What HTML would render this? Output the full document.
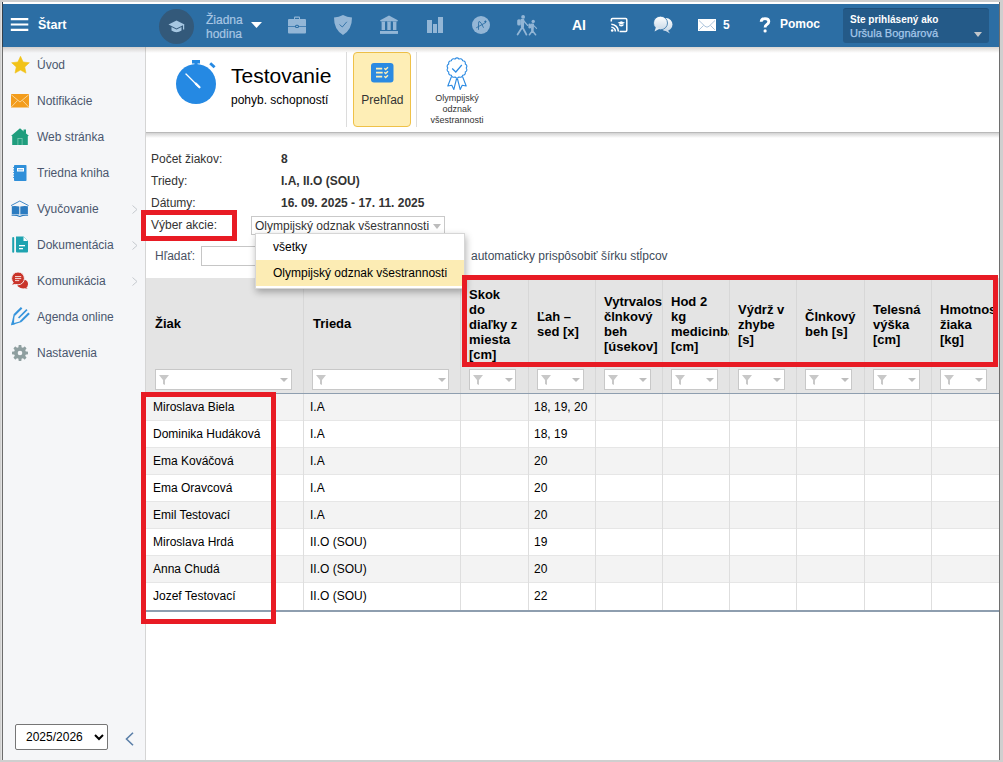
<!DOCTYPE html>
<html><head><meta charset="utf-8">
<style>
*{box-sizing:border-box;}
html,body{margin:0;padding:0;}
body{width:1003px;height:762px;position:relative;overflow:hidden;background:#cfcfcf;font-family:"Liberation Sans",sans-serif;font-size:12px;color:#222;}
.a{position:absolute;}
.t{position:absolute;white-space:nowrap;line-height:1;}
#frame{left:2px;top:2px;width:998px;height:758px;background:#fff;}
#lline{left:1px;top:2px;width:1px;height:758px;background:#e2e2e2;}
#ldark{left:2px;top:2px;width:1px;height:758px;background:linear-gradient(#33404c 0,#33404c 45px,#6c6c6c 45px);}
#rdark{left:999px;top:2px;width:1px;height:758px;background:#6e6e6e;}
#hdr{left:3px;top:4px;width:996px;height:43px;background:#2c6ea4;}
#side{left:3px;top:47px;width:143px;height:713px;background:#f5f6f8;border-right:1px solid #d5d5d5;}
.hi{fill:#93b6d6;}
.si{left:37px;font-size:12px;color:#4a566e;}
.chev{left:132px;width:6px;height:9px;}
.lbl{left:151px;font-size:12px;color:#333;}
.val{left:281px;font-size:12px;font-weight:bold;color:#333;}
</style></head><body>
<div class="a" id="frame"></div>
<div class="a" id="lline"></div>
<div class="a" id="ldark"></div>
<div class="a" id="rdark"></div>
<div class="a" id="hdr"></div>

<!-- header content -->
<svg class="a" style="left:10px;top:16px" width="20" height="17" viewBox="0 0 20 17"><path d="M0.8 3.1 H18.3 M0.8 8.5 H18.3 M0.8 13.9 H18.3" stroke="#fff" stroke-width="2.1"/></svg>
<div class="t" style="left:38px;top:19px;font-size:12.5px;font-weight:bold;color:#fff;">Štart</div>

<div class="a" style="left:159px;top:9px;width:35px;height:35px;border-radius:50%;background:#33597a"></div>
<svg class="a" style="left:168px;top:20px" width="17" height="15" viewBox="0 0 17 15"><path d="M8.5 0.5 L16.5 4.5 L8.5 8.5 L0.5 4.5Z" fill="#a6c7e2"/><path d="M3.5 7 V10.5 Q8.5 14 13.5 10.5 V7 L8.5 9.6 Z" fill="#a6c7e2"/><rect x="15" y="4.5" width="1.2" height="5" fill="#a6c7e2"/></svg>
<div class="t" style="left:206px;top:13px;font-size:12px;line-height:14px;color:#a8c6e3;-webkit-text-stroke:0.2px #a8c6e3;">Žiadna<br>hodina</div>
<svg class="a" style="left:251px;top:22px" width="11" height="6" viewBox="0 0 11 6"><path d="M0 0H11L5.5 6Z" fill="#fff"/></svg>

<!-- briefcase -->
<svg class="a" style="left:287px;top:16px" width="20" height="18" viewBox="0 0 20 18"><path d="M7 3 V1.5 Q7 0.5 8 0.5 H12 Q13 0.5 13 1.5 V3 H12 V1.7 H8 V3Z" class="hi"/><rect x="1" y="3" width="18" height="14.5" rx="1" class="hi"/><rect x="1" y="10" width="18" height="0.9" fill="#3e7bb0"/><rect x="8" y="8.8" width="4" height="3.2" rx="1.5" fill="#2c6ea4"/><rect x="9" y="9.9" width="2" height="1" class="hi"/></svg>
<!-- shield -->
<svg class="a" style="left:333px;top:15px" width="20" height="20" viewBox="0 0 20 20"><path d="M10 0 Q14 2.2 19 2.5 Q19.2 14.5 10 20 Q0.8 14.5 1 2.5 Q6 2.2 10 0Z" class="hi"/><path d="M6.5 9.5 L9.3 12 L13.8 6.8" stroke="#2c6ea4" stroke-width="0.9" fill="none"/></svg>
<!-- bank -->
<svg class="a" style="left:380px;top:15px" width="19" height="19" viewBox="0 0 19 19"><path d="M9 0.6 L17.8 5.2 V6.2 H0.2 V5.2Z" class="hi"/><path d="M1.2 6.5 H5.4 L5 7.6 V15 H1.6 V7.6Z M6.9 6.5 H11.1 L10.7 7.6 V15 H7.3 V7.6Z M12.6 6.5 H16.8 L16.4 7.6 V15 H13 V7.6Z" class="hi"/><rect x="0" y="16" width="18" height="2.9" class="hi"/></svg>
<!-- bars -->
<svg class="a" style="left:427px;top:17px" width="16" height="16" viewBox="0 0 16 16"><rect x="0" y="3" width="5" height="13" class="hi"/><rect x="6" y="7" width="4" height="9" class="hi"/><rect x="11" y="0" width="5" height="16" class="hi"/></svg>
<!-- A+ -->
<svg class="a" style="left:472px;top:16px" width="18" height="18" viewBox="0 0 18 18"><circle cx="9" cy="9" r="9" class="hi"/><path d="M6.5 13.4 V7.2 Q6.5 4.8 8 5.8 Q9.3 6.8 11.4 11.4 M4.6 11.6 L13.6 6.6" stroke="#2c6ea4" stroke-width="0.9" fill="none" stroke-linecap="round"/><path d="M12.3 5.6 H14.5 M13.4 4.5 V6.7" stroke="#2c6ea4" stroke-width="1" fill="none"/></svg>
<!-- walkers -->
<svg class="a" style="left:510px;top:10px" width="35" height="30" viewBox="0 0 35 30"><g fill="#93b6d6" stroke="#93b6d6" stroke-linecap="round" stroke-linejoin="round"><circle cx="13.1" cy="6.9" r="1.9" stroke="none"/><rect x="7.2" y="9.2" width="3.6" height="6.4" rx="1.6" stroke="none"/><path d="M11.2 9.8 L13.6 9.6 L13.3 17 L11.6 17Z" stroke-width="1.4"/><path d="M13.4 10.5 L17.6 15.4" stroke-width="1.3" fill="none"/><path d="M12.4 17 L7.6 24.6 M12.4 17 L16.4 24.6" stroke-width="1.8" fill="none"/><circle cx="23.2" cy="11.4" r="1.7" stroke="none"/><rect x="18.4" y="13.6" width="2.6" height="4.9" rx="1.2" stroke="none"/><path d="M21.6 14.2 L23.4 14.1 L23 20.8 L21.8 20.8Z" stroke-width="1.2"/><path d="M23.3 15.2 L26.6 18.4" stroke-width="1.1" fill="none"/><path d="M22.4 20.8 L19.4 24.8 M22.4 20.8 L25.6 24.8" stroke-width="1.5" fill="none"/></g></svg>

<div class="t" style="left:572px;top:18px;font-size:14px;font-weight:bold;color:#fff;">AI</div>
<!-- cast -->
<svg class="a" style="left:610px;top:17px" width="18" height="16" viewBox="0 0 18 16"><path d="M1.3 4.6 V2.8 Q1.3 1.6 2.5 1.6 H15.6 Q16.8 1.6 16.8 2.8 V13.2 Q16.8 14.4 15.6 14.4 H9.6" stroke="#fff" stroke-width="1.5" fill="none"/><path d="M1.3 7.2 A7.4 7.4 0 0 1 8.4 14.4 M1.3 10.2 A4.3 4.3 0 0 1 5.4 14.4" stroke="#fff" stroke-width="1.6" fill="none"/><circle cx="2.2" cy="13.5" r="1.3" fill="#fff"/><path d="M11.3 4.2 L15 5.8 L11.3 7.4 L7.6 5.8Z M9.1 7 V8.6 Q11.3 10.4 13.5 8.6 V7 L11.3 8Z" fill="#fff"/></svg>
<!-- chat -->
<svg class="a" style="left:653px;top:16px" width="20" height="18" viewBox="0 0 20 18"><defs><linearGradient id="cg" x1="0" y1="0" x2="0" y2="1"><stop offset="0" stop-color="#fff"/><stop offset="1" stop-color="#c9d9e8"/></linearGradient></defs><ellipse cx="13" cy="8.5" rx="6.5" ry="6.5" fill="url(#cg)"/><path d="M14 13 L17 17.5 L11 14Z" fill="#c9d9e8"/><ellipse cx="7.5" cy="7" rx="7" ry="6.8" fill="url(#cg)" stroke="#2c6ea4" stroke-width="0.8"/><path d="M3 11 L1.5 15.5 L7 12.5Z" fill="#dfe9f2"/></svg>
<!-- envelope -->
<svg class="a" style="left:698px;top:19px" width="18" height="12" viewBox="0 0 18 12"><rect x="0" y="0" width="18" height="12" fill="#fff"/><path d="M1 1.5 L7 7.3 Q9 9 11 7.3 L17 1.5 M1.2 10.8 L5.5 6.5 M16.8 10.8 L12.5 6.5" stroke="#88aacb" stroke-width="0.7" fill="none"/></svg>
<div class="t" style="left:723px;top:19px;font-size:12px;font-weight:bold;color:#fff;">5</div>
<svg class="a" style="left:759px;top:17px" width="12" height="16" viewBox="0 0 12 16"><path d="M2.2 4.8 Q2.2 1.6 6 1.6 Q9.8 1.6 9.8 4.6 Q9.8 6.5 7.6 7.8 Q6.1 8.7 6.1 10.6" stroke="#fff" stroke-width="2.9" fill="none"/><circle cx="6.1" cy="13.9" r="1.6" fill="#fff"/></svg>
<div class="t" style="left:780px;top:18px;font-size:12px;font-weight:bold;color:#fff;">Pomoc</div>
<div class="a" style="left:843px;top:8px;width:146px;height:35px;border-radius:3px;background:#245a88;border-top:1px solid #1e4f7b;"></div>
<div class="t" style="left:850px;top:14.6px;font-size:10px;font-weight:bold;color:#fff;">Ste prihlásený ako</div>
<div class="t" style="left:850px;top:28px;font-size:11px;color:#a6c8ea;-webkit-text-stroke:0.25px #a6c8ea;">Uršula Bognárová</div>
<svg class="a" style="left:974px;top:32px" width="8" height="5" viewBox="0 0 8 5"><path d="M0 0H8L4 5Z" fill="#c3c7cb"/></svg>

<div class="a" id="side"></div>

<!-- sidebar items -->
<svg class="a" style="left:10.5px;top:56px" width="19" height="18" viewBox="0 0 19 18"><path d="M9.50 0.30 L12.12 5.99 L18.34 6.73 L13.75 10.98 L14.97 17.12 L9.50 14.06 L4.03 17.12 L5.25 10.98 L0.66 6.73 L6.88 5.99Z" fill="#f2c318" stroke="#f2c318" stroke-width="0.6" stroke-linejoin="round"/></svg>
<div class="t si" style="top:59px">Úvod</div>
<svg class="a" style="left:11px;top:94px" width="18" height="14" viewBox="0 0 18 14"><rect width="18" height="13.5" fill="#f39c1b"/><path d="M0.3 0.8 L9 8 L17.7 0.8 M0.3 13 L6.5 6.5 M17.7 13 L11.5 6.5" stroke="#fde3b8" stroke-width="0.8" fill="none"/></svg>
<div class="t si" style="top:95px">Notifikácie</div>
<svg class="a" style="left:11px;top:128px" width="18" height="17" viewBox="0 0 18 17"><path d="M9 0.3 L17.8 7.8 L16.8 8.3 V17 H1.2 V8.3 L0.2 7.8Z" fill="#1f9d7d"/><rect x="12.5" y="1.5" width="2.5" height="4" fill="#1f9d7d"/><rect x="6.5" y="10" width="5" height="7" fill="#7ccab5"/><rect x="7.3" y="10.8" width="3.4" height="6.2" fill="#1f9d7d"/></svg>
<div class="t si" style="top:131px">Web stránka</div>
<svg class="a" style="left:13px;top:165px" width="14" height="16" viewBox="0 0 14 16"><rect x="1" y="0" width="12.5" height="16" rx="0.8" fill="#2f8fd9"/><rect x="4" y="3" width="7" height="3.5" fill="#fff"/><rect x="5" y="4" width="5" height="1.5" fill="#9cc8ee"/><path d="M0 2.5H2M0 5H2M0 7.5H2M0 10H2M0 12.5H2" stroke="#2f8fd9" stroke-width="0.8"/></svg>
<div class="t si" style="top:167px">Triedna kniha</div>
<svg class="a" style="left:10px;top:200px" width="20" height="18" viewBox="0 0 20 18"><path d="M1 5.6 L9.8 1 L18.6 5.6" stroke="#2b7bc0" stroke-width="0.9" fill="none"/><path d="M1.8 6.3 Q5.5 5.5 9.3 6.6 V14.6 Q5.5 13.8 1.8 14.2Z M17.9 6.3 Q14.1 5.5 10.3 6.6 V14.6 Q14.1 13.8 17.9 14.2Z" fill="#2b7bc0"/><path d="M1.6 15.3 Q5.5 14.6 9.8 16.4 Q14.1 14.6 18.1 15.3" stroke="#2b7bc0" stroke-width="1.1" fill="none"/></svg>
<div class="t si" style="top:203px">Vyučovanie</div>
<svg class="a" style="left:11px;top:236px" width="18" height="17" viewBox="0 0 18 17"><rect x="1.2" y="1" width="2" height="15.8" rx="1" fill="#1ea3b0"/><path d="M5 0.5 H12.5 L17 5 V15.5 Q17 16.5 16 16.5 H6 Q5 16.5 5 15.5Z" fill="#1ea3b0"/><path d="M12.5 0.8 V5 H16.8" fill="#fff"/><rect x="8" y="9" width="6" height="1.3" fill="#fff"/><rect x="8" y="12" width="4" height="1.3" fill="#fff"/></svg>
<div class="t si" style="top:239px">Dokumentácia</div>
<svg class="a" style="left:8px;top:270px" width="24" height="22" viewBox="0 0 24 22"><g fill="#c9342a"><path d="M10.5 10.5 Q15 9.5 17.5 10 Q20.2 11 20 14.5 Q19.6 17 18.2 17.8 L19.8 18.8 L16.5 18.3 Q13 18.8 10 16.5 Q9.4 15.8 9.5 15Z"/></g><circle cx="10" cy="8.4" r="6.4" fill="#c9342a" stroke="#f5f6f8" stroke-width="0.9"/><path d="M6 12.2 L4 14.8 L8.8 13.6Z" fill="#c9342a"/><g fill="#f3cfcb"><rect x="7" y="6" width="6.2" height="1.1"/><rect x="7" y="8" width="6.2" height="1.1"/><rect x="7" y="10" width="4.2" height="1.1"/></g></svg>
<div class="t si" style="top:275px">Komunikácia</div>
<svg class="a" style="left:8px;top:304px" width="24" height="24" viewBox="0 0 24 24"><g transform="translate(3.2 21.3) rotate(-45)" fill="#3594dc"><rect x="9.4" y="-6.1" width="10.4" height="2.1"/><rect x="10.4" y="-0.8" width="11.8" height="1.7"/><rect x="9.6" y="3" width="11.6" height="2.1"/><path d="M9.6 -6.1 L0 0 L9.8 5.1 L9.8 3 L8.6 3.3 L3.6 0.3 L8.4 -3.8 L9.6 -4Z"/><path d="M0 0 L3.8 -2.4 L4 2.3Z"/></g></svg>
<div class="t si" style="top:311px">Agenda online</div>
<svg class="a" style="left:11px;top:344px" width="18" height="18" viewBox="0 0 18 18"><g fill="#8f9fa0"><circle cx="9" cy="9" r="6"/><rect x="7.5" y="1" width="3" height="16" rx="0.7"/><rect x="7.5" y="1" width="3" height="16" rx="0.7" transform="rotate(45 9 9)"/><rect x="7.5" y="1" width="3" height="16" rx="0.7" transform="rotate(90 9 9)"/><rect x="7.5" y="1" width="3" height="16" rx="0.7" transform="rotate(135 9 9)"/></g><circle cx="9" cy="9" r="2.3" fill="#f5f6f8"/></svg>
<div class="t si" style="top:347px">Nastavenia</div>
<svg class="a chev" style="top:205px" viewBox="0 0 6 9"><path d="M0.5 0.5 L5 4.5 L0.5 8.5" stroke="#c5c9ce" stroke-width="1" fill="none"/></svg>
<svg class="a chev" style="top:241px" viewBox="0 0 6 9"><path d="M0.5 0.5 L5 4.5 L0.5 8.5" stroke="#c5c9ce" stroke-width="1" fill="none"/></svg>
<svg class="a chev" style="top:277px" viewBox="0 0 6 9"><path d="M0.5 0.5 L5 4.5 L0.5 8.5" stroke="#c5c9ce" stroke-width="1" fill="none"/></svg>
<div class="a" style="left:15px;top:724px;width:93px;height:26px;border:1px solid #767676;border-radius:2px;background:#fff;"></div>
<div class="t" style="left:26px;top:731px;font-size:12px;color:#000;">2025/2026</div>
<svg class="a" style="left:94px;top:734px" width="10" height="7" viewBox="0 0 10 7"><path d="M1 1 L5 5 L9 1" stroke="#000" stroke-width="2" fill="none"/></svg>
<svg class="a" style="left:125px;top:732px" width="9" height="14" viewBox="0 0 9 14"><path d="M8 0.7 L1.5 7 L8 13.3" stroke="#5b7fa8" stroke-width="1.6" fill="none"/></svg>

<!-- toolbar -->
<div class="a" style="left:146px;top:132px;width:853px;height:1px;background:#b9b9b9;"></div>
<div class="a" style="left:146px;top:133px;width:853px;height:5px;background:linear-gradient(#d2d2d2,#fff);"></div>
<svg class="a" style="left:175px;top:59px" width="42" height="46" viewBox="0 0 42 46"><circle cx="21" cy="25" r="20" fill="#2589e3"/><rect x="17" y="1" width="8" height="3.5" fill="#2589e3"/><rect x="19.5" y="3" width="3" height="3" fill="#2589e3"/><path d="M35.2 4.2 L39.6 8.3" stroke="#2589e3" stroke-width="2.8"/><path d="M11 15 L23.5 27.5" stroke="#fff" stroke-width="1.3" stroke-linecap="round"/><path d="M20.8 24.6 L24.5 28.3" stroke="#fff" stroke-width="2.2" stroke-linecap="round"/></svg>
<div class="t" style="left:231px;top:65px;font-size:21px;color:#000;">Testovanie</div>
<div class="t" style="left:231px;top:94px;font-size:12px;color:#000;">pohyb. schopností</div>
<div class="a" style="left:346px;top:52px;width:1px;height:75px;background:#dcdcdc;"></div>
<div class="a" style="left:416px;top:52px;width:1px;height:75px;background:#dcdcdc;"></div>
<div class="a" style="left:353px;top:52px;width:58px;height:75px;border:1px solid #efc148;border-radius:4px;background:#feeeb6;"></div>
<svg class="a" style="left:371px;top:63px" width="23" height="20" viewBox="0 0 23 20"><rect x="0" y="0" width="22.5" height="19.5" rx="3" fill="#2b8ae2"/><path d="M5 5.7 H11.2 M5 9.7 H11.7 M5 13.7 H11.2" stroke="#feefb8" stroke-width="1.7"/><path d="M13.3 5.3 L14.7 6.5 L17 4.2 M13.3 9.3 L14.7 10.5 L17 8.2 M13.3 13.3 L14.7 14.5 L17 12.2" stroke="#feefb8" stroke-width="1.4" fill="none"/></svg>
<div class="t" style="left:361.3px;top:94px;font-size:12px;color:#333;">Prehľad</div>
<svg class="a" style="left:445px;top:57px" width="24" height="34" viewBox="0 0 24 34"><path d="M21.20 11.00 Q22.95 13.50 20.29 14.99 Q20.78 18.00 17.74 18.19 Q16.87 21.12 14.05 19.97 Q12.00 22.23 9.95 19.97 Q7.13 21.12 6.26 18.19 Q3.22 18.00 3.71 14.99 Q1.05 13.50 2.80 11.00 Q1.05 8.50 3.71 7.01 Q3.22 4.00 6.26 3.81 Q7.13 0.88 9.95 2.03 Q12.00 -0.23 14.05 2.03 Q16.87 0.88 17.74 3.81 Q20.78 4.00 20.29 7.01 Q22.95 8.50 21.20 11.00Z" fill="none" stroke="#2b8ae2" stroke-width="1.1"/><path d="M7.2 11.5 L10.8 15 L16.8 8" stroke="#2b8ae2" stroke-width="1.2" fill="none"/><path d="M6.5 19.5 L2.8 29 L6.8 28.2 L8.8 32.5 L11.6 21.5 M17.5 19.5 L21.2 29 L17.2 28.2 L15.2 32.5 L12.4 21.5" stroke="#2b8ae2" stroke-width="1.1" fill="none" stroke-linejoin="round"/></svg>
<div class="t" style="left:417px;top:93.2px;width:80px;text-align:center;font-size:9px;line-height:10.75px;color:#333;">Olympijský<br>odznak<br>všestrannosti</div>

<!-- info -->
<div class="t lbl" style="top:153px">Počet žiakov:</div>
<div class="t val" style="top:153px">8</div>
<div class="t lbl" style="top:175px">Triedy:</div>
<div class="t val" style="top:175px">I.A, II.O (SOU)</div>
<div class="t lbl" style="top:197px">Dátumy:</div>
<div class="t val" style="top:197px">16. 09. 2025 - 17. 11. 2025</div>
<div class="t lbl" style="top:219px;left:151px">Výber akcie:</div>
<div class="a" style="left:251px;top:216px;width:194px;height:19px;border:1px solid #c9c9c9;background:#fff;"></div>
<div class="t" style="left:255px;top:220px;font-size:12px;color:#333;">Olympijský odznak všestrannosti</div>
<svg class="a" style="left:433px;top:224px" width="8" height="5" viewBox="0 0 8 5"><path d="M0 0H8L4 5Z" fill="#bcbcbc"/></svg>
<div class="t" style="left:155px;top:250px;font-size:12px;color:#4b5262;">Hľadať:</div>
<div class="a" style="left:201px;top:246px;width:80px;height:20px;border:1px solid #c6c6c6;background:#fff;"></div>
<div class="t" style="left:471px;top:250px;font-size:12px;color:#404b5a;">automaticky prispôsobiť šírku stĺpcov</div>
<!-- table -->
<div class="a" style="left:146px;top:278px;width:853px;height:115px;background:#e4e4e4;"></div>
<div class="a" style="left:146px;top:393px;width:853px;height:1px;background:#8e9eaf;"></div>
<div class="a" style="left:146px;top:394px;width:853px;height:27px;background:#f3f3f3;"></div>
<div class="t" style="left:153px;top:401px;font-size:12px;color:#000;">Miroslava Biela</div>
<div class="t" style="left:310px;top:401px;font-size:12px;color:#000;">I.A</div>
<div class="t" style="left:534px;top:401px;font-size:12px;color:#000;">18, 19, 20</div>
<div class="a" style="left:146px;top:421px;width:853px;height:27px;background:#fff;"></div>
<div class="a" style="left:146px;top:420px;width:853px;height:1px;background:#e6e6e6;"></div>
<div class="t" style="left:153px;top:428px;font-size:12px;color:#000;">Dominika Hudáková</div>
<div class="t" style="left:310px;top:428px;font-size:12px;color:#000;">I.A</div>
<div class="t" style="left:534px;top:428px;font-size:12px;color:#000;">18, 19</div>
<div class="a" style="left:146px;top:448px;width:853px;height:27px;background:#f3f3f3;"></div>
<div class="a" style="left:146px;top:447px;width:853px;height:1px;background:#e6e6e6;"></div>
<div class="t" style="left:153px;top:455px;font-size:12px;color:#000;">Ema Kováčová</div>
<div class="t" style="left:310px;top:455px;font-size:12px;color:#000;">I.A</div>
<div class="t" style="left:534px;top:455px;font-size:12px;color:#000;">20</div>
<div class="a" style="left:146px;top:475px;width:853px;height:27px;background:#fff;"></div>
<div class="a" style="left:146px;top:474px;width:853px;height:1px;background:#e6e6e6;"></div>
<div class="t" style="left:153px;top:482px;font-size:12px;color:#000;">Ema Oravcová</div>
<div class="t" style="left:310px;top:482px;font-size:12px;color:#000;">I.A</div>
<div class="t" style="left:534px;top:482px;font-size:12px;color:#000;">20</div>
<div class="a" style="left:146px;top:502px;width:853px;height:27px;background:#f3f3f3;"></div>
<div class="a" style="left:146px;top:501px;width:853px;height:1px;background:#e6e6e6;"></div>
<div class="t" style="left:153px;top:509px;font-size:12px;color:#000;">Emil Testovací</div>
<div class="t" style="left:310px;top:509px;font-size:12px;color:#000;">I.A</div>
<div class="t" style="left:534px;top:509px;font-size:12px;color:#000;">20</div>
<div class="a" style="left:146px;top:529px;width:853px;height:27px;background:#fff;"></div>
<div class="a" style="left:146px;top:528px;width:853px;height:1px;background:#e6e6e6;"></div>
<div class="t" style="left:153px;top:536px;font-size:12px;color:#000;">Miroslava Hrdá</div>
<div class="t" style="left:310px;top:536px;font-size:12px;color:#000;">II.O (SOU)</div>
<div class="t" style="left:534px;top:536px;font-size:12px;color:#000;">19</div>
<div class="a" style="left:146px;top:556px;width:853px;height:27px;background:#f3f3f3;"></div>
<div class="a" style="left:146px;top:555px;width:853px;height:1px;background:#e6e6e6;"></div>
<div class="t" style="left:153px;top:563px;font-size:12px;color:#000;">Anna Chudá</div>
<div class="t" style="left:310px;top:563px;font-size:12px;color:#000;">II.O (SOU)</div>
<div class="t" style="left:534px;top:563px;font-size:12px;color:#000;">20</div>
<div class="a" style="left:146px;top:583px;width:853px;height:27px;background:#fff;"></div>
<div class="a" style="left:146px;top:582px;width:853px;height:1px;background:#e6e6e6;"></div>
<div class="t" style="left:153px;top:590px;font-size:12px;color:#000;">Jozef Testovací</div>
<div class="t" style="left:310px;top:590px;font-size:12px;color:#000;">II.O (SOU)</div>
<div class="t" style="left:534px;top:590px;font-size:12px;color:#000;">22</div>
<div class="a" style="left:146px;top:610px;width:853px;height:2px;background:#8e9eaf;"></div>
<div class="a" style="left:303px;top:278px;width:1px;height:115px;background:#d7d7d7;"></div>
<div class="a" style="left:303px;top:394px;width:1px;height:216px;background:#dedede;"></div>
<div class="a" style="left:460px;top:278px;width:1px;height:115px;background:#d7d7d7;"></div>
<div class="a" style="left:460px;top:394px;width:1px;height:216px;background:#dedede;"></div>
<div class="a" style="left:528px;top:278px;width:1px;height:115px;background:#d7d7d7;"></div>
<div class="a" style="left:528px;top:394px;width:1px;height:216px;background:#dedede;"></div>
<div class="a" style="left:595px;top:278px;width:1px;height:115px;background:#d7d7d7;"></div>
<div class="a" style="left:595px;top:394px;width:1px;height:216px;background:#dedede;"></div>
<div class="a" style="left:662px;top:278px;width:1px;height:115px;background:#d7d7d7;"></div>
<div class="a" style="left:662px;top:394px;width:1px;height:216px;background:#dedede;"></div>
<div class="a" style="left:729px;top:278px;width:1px;height:115px;background:#d7d7d7;"></div>
<div class="a" style="left:729px;top:394px;width:1px;height:216px;background:#dedede;"></div>
<div class="a" style="left:796px;top:278px;width:1px;height:115px;background:#d7d7d7;"></div>
<div class="a" style="left:796px;top:394px;width:1px;height:216px;background:#dedede;"></div>
<div class="a" style="left:864px;top:278px;width:1px;height:115px;background:#d7d7d7;"></div>
<div class="a" style="left:864px;top:394px;width:1px;height:216px;background:#dedede;"></div>
<div class="a" style="left:931px;top:278px;width:1px;height:115px;background:#d7d7d7;"></div>
<div class="a" style="left:931px;top:394px;width:1px;height:216px;background:#dedede;"></div>
<div class="a" style="left:155px;top:369px;width:137px;height:21px;border:1px solid #c8c8c8;background:#fff;"></div>
<svg class="a" style="left:159px;top:375px" width="10" height="10" viewBox="0 0 10 10"><path d="M0 0 H10 L6 5 V10 L4 9 V5Z" fill="#c8c8c8"/></svg>
<svg class="a" style="left:280px;top:378px" width="8" height="4" viewBox="0 0 8 4"><path d="M0 0H8L4 4Z" fill="#bdbdbd"/></svg>
<div class="a" style="left:312px;top:369px;width:137px;height:21px;border:1px solid #c8c8c8;background:#fff;"></div>
<svg class="a" style="left:316px;top:375px" width="10" height="10" viewBox="0 0 10 10"><path d="M0 0 H10 L6 5 V10 L4 9 V5Z" fill="#c8c8c8"/></svg>
<svg class="a" style="left:438px;top:378px" width="8" height="4" viewBox="0 0 8 4"><path d="M0 0H8L4 4Z" fill="#bdbdbd"/></svg>
<div class="a" style="left:469px;top:369px;width:47px;height:21px;border:1px solid #c8c8c8;background:#fff;"></div>
<svg class="a" style="left:473px;top:375px" width="10" height="10" viewBox="0 0 10 10"><path d="M0 0 H10 L6 5 V10 L4 9 V5Z" fill="#c8c8c8"/></svg>
<svg class="a" style="left:504.5px;top:378px" width="8" height="4" viewBox="0 0 8 4"><path d="M0 0H8L4 4Z" fill="#bdbdbd"/></svg>
<div class="a" style="left:537px;top:369px;width:47px;height:21px;border:1px solid #c8c8c8;background:#fff;"></div>
<svg class="a" style="left:541px;top:375px" width="10" height="10" viewBox="0 0 10 10"><path d="M0 0 H10 L6 5 V10 L4 9 V5Z" fill="#c8c8c8"/></svg>
<svg class="a" style="left:571.5px;top:378px" width="8" height="4" viewBox="0 0 8 4"><path d="M0 0H8L4 4Z" fill="#bdbdbd"/></svg>
<div class="a" style="left:604px;top:369px;width:47px;height:21px;border:1px solid #c8c8c8;background:#fff;"></div>
<svg class="a" style="left:608px;top:375px" width="10" height="10" viewBox="0 0 10 10"><path d="M0 0 H10 L6 5 V10 L4 9 V5Z" fill="#c8c8c8"/></svg>
<svg class="a" style="left:638.5px;top:378px" width="8" height="4" viewBox="0 0 8 4"><path d="M0 0H8L4 4Z" fill="#bdbdbd"/></svg>
<div class="a" style="left:671px;top:369px;width:47px;height:21px;border:1px solid #c8c8c8;background:#fff;"></div>
<svg class="a" style="left:675px;top:375px" width="10" height="10" viewBox="0 0 10 10"><path d="M0 0 H10 L6 5 V10 L4 9 V5Z" fill="#c8c8c8"/></svg>
<svg class="a" style="left:705.5px;top:378px" width="8" height="4" viewBox="0 0 8 4"><path d="M0 0H8L4 4Z" fill="#bdbdbd"/></svg>
<div class="a" style="left:738px;top:369px;width:47px;height:21px;border:1px solid #c8c8c8;background:#fff;"></div>
<svg class="a" style="left:742px;top:375px" width="10" height="10" viewBox="0 0 10 10"><path d="M0 0 H10 L6 5 V10 L4 9 V5Z" fill="#c8c8c8"/></svg>
<svg class="a" style="left:772.5px;top:378px" width="8" height="4" viewBox="0 0 8 4"><path d="M0 0H8L4 4Z" fill="#bdbdbd"/></svg>
<div class="a" style="left:805px;top:369px;width:47px;height:21px;border:1px solid #c8c8c8;background:#fff;"></div>
<svg class="a" style="left:809px;top:375px" width="10" height="10" viewBox="0 0 10 10"><path d="M0 0 H10 L6 5 V10 L4 9 V5Z" fill="#c8c8c8"/></svg>
<svg class="a" style="left:840.5px;top:378px" width="8" height="4" viewBox="0 0 8 4"><path d="M0 0H8L4 4Z" fill="#bdbdbd"/></svg>
<div class="a" style="left:873px;top:369px;width:47px;height:21px;border:1px solid #c8c8c8;background:#fff;"></div>
<svg class="a" style="left:877px;top:375px" width="10" height="10" viewBox="0 0 10 10"><path d="M0 0 H10 L6 5 V10 L4 9 V5Z" fill="#c8c8c8"/></svg>
<svg class="a" style="left:907.5px;top:378px" width="8" height="4" viewBox="0 0 8 4"><path d="M0 0H8L4 4Z" fill="#bdbdbd"/></svg>
<div class="a" style="left:940px;top:369px;width:47px;height:21px;border:1px solid #c8c8c8;background:#fff;"></div>
<svg class="a" style="left:944px;top:375px" width="10" height="10" viewBox="0 0 10 10"><path d="M0 0 H10 L6 5 V10 L4 9 V5Z" fill="#c8c8c8"/></svg>
<svg class="a" style="left:974.5px;top:378px" width="8" height="4" viewBox="0 0 8 4"><path d="M0 0H8L4 4Z" fill="#bdbdbd"/></svg>
<div class="t" style="left:155px;top:315.50px;font-size:13px;font-weight:bold;line-height:15px;color:#000;">Žiak</div>
<div class="t" style="left:313px;top:315.50px;font-size:13px;font-weight:bold;line-height:15px;color:#000;">Trieda</div>
<div class="a" style="left:460px;top:278px;width:68px;height:90px;overflow:hidden;"><div class="t" style="left:9px;top:8.50px;font-size:13px;font-weight:bold;line-height:15px;color:#000;">Skok<br>do<br>diaľky z<br>miesta<br>[cm]</div></div>
<div class="a" style="left:528px;top:278px;width:67px;height:90px;overflow:hidden;"><div class="t" style="left:9px;top:31.00px;font-size:13px;font-weight:bold;line-height:15px;color:#000;">Ľah –<br>sed [x]</div></div>
<div class="a" style="left:595px;top:278px;width:67px;height:90px;overflow:hidden;"><div class="t" style="left:9px;top:16.00px;font-size:13px;font-weight:bold;line-height:15px;color:#000;">Vytrvalostný<br>člnkový<br>beh<br>[úsekov]</div></div>
<div class="a" style="left:662px;top:278px;width:67px;height:90px;overflow:hidden;"><div class="t" style="left:9px;top:16.00px;font-size:13px;font-weight:bold;line-height:15px;color:#000;">Hod 2<br>kg<br>medicinbalu<br>[cm]</div></div>
<div class="a" style="left:729px;top:278px;width:67px;height:90px;overflow:hidden;"><div class="t" style="left:9px;top:23.50px;font-size:13px;font-weight:bold;line-height:15px;color:#000;">Výdrž v<br>zhybe<br>[s]</div></div>
<div class="a" style="left:796px;top:278px;width:68px;height:90px;overflow:hidden;"><div class="t" style="left:9px;top:31.00px;font-size:13px;font-weight:bold;line-height:15px;color:#000;">Člnkový<br>beh [s]</div></div>
<div class="a" style="left:864px;top:278px;width:67px;height:90px;overflow:hidden;"><div class="t" style="left:9px;top:23.50px;font-size:13px;font-weight:bold;line-height:15px;color:#000;">Telesná<br>výška<br>[cm]</div></div>
<div class="a" style="left:931px;top:278px;width:67px;height:90px;overflow:hidden;"><div class="t" style="left:9px;top:23.50px;font-size:13px;font-weight:bold;line-height:15px;color:#000;">Hmotnosť<br>žiaka<br>[kg]</div></div>

<div class="a" style="left:3px;top:47px;width:996px;height:6px;background:linear-gradient(rgba(60,40,20,0.19),rgba(0,0,0,0));"></div>
<!-- popup -->
<div class="a" style="left:255px;top:233px;width:210px;height:56px;background:#fff;border:1px solid #d6d6d6;box-shadow:1px 3px 7px rgba(0,0,0,0.3);"></div>
<div class="t" style="left:273px;top:241px;font-size:12px;color:#000;">všetky</div>
<div class="a" style="left:256px;top:260px;width:208px;height:26px;background:#fcecb4;"></div>
<div class="t" style="left:273px;top:267px;font-size:12px;color:#000;">Olympijský odznak všestrannosti</div>
<!-- red boxes -->
<div class="a" style="left:141px;top:210px;width:96px;height:31px;border:5px solid #e81b24;"></div>
<div class="a" style="left:462px;top:275px;width:536px;height:92px;border:5px solid #e81b24;"></div>
<div class="a" style="left:141px;top:392px;width:135px;height:232px;border:5px solid #e81b24;"></div>
<!-- frame on top -->
<div class="a" style="left:999px;top:0;width:4px;height:762px;background:#cfcfcf;z-index:10"></div>
<div class="a" style="left:999px;top:2px;width:1px;height:758px;background:#6e6e6e;z-index:11"></div>
<div class="a" style="left:0;top:760px;width:1003px;height:2px;background:#cfcfcf;z-index:10"></div>
</body></html>
